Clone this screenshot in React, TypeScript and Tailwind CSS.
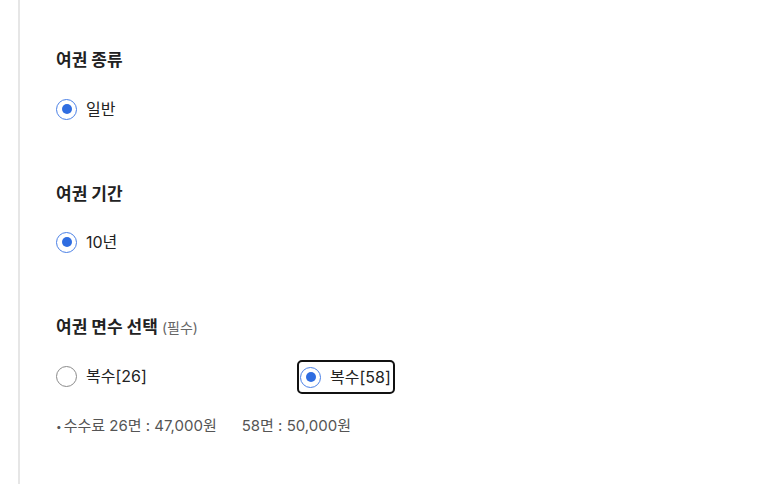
import React from 'react';

const font = { fontFamily: 'Inter, "Noto Sans CJK KR", sans-serif' };

function Radio({ checked }: { checked: boolean }) {
  return checked ? (
    <span className="flex items-center justify-center w-[21px] h-[21px] rounded-full border-[1.5px] border-[#4a80e6] bg-white shrink-0">
      <span className="w-[10px] h-[10px] rounded-full bg-[#2f6de1]" />
    </span>
  ) : (
    <span className="w-[21px] h-[21px] rounded-full border border-[#8a8a8a] bg-white shrink-0" />
  );
}

function Option({ label, checked, focused }: { label: string; checked: boolean; focused?: boolean }) {
  return (
    <label
      className={
        'inline-flex items-center gap-[9px] h-[28px] pr-[1px] rounded-[2px] text-[16px] text-[#222] ' +
        (focused ? 'outline-2 outline-[#111] outline-offset-[1px]' : '')
      }
    >
      <Radio checked={checked} />
      <span className="leading-[28px]">{label}</span>
    </label>
  );
}

function Section({ title, sub, children }: { title: string; sub?: string; children: React.ReactNode }) {
  return (
    <section>
      <h3 className="h-[24px] leading-[24px] text-[17px] font-bold text-[#222]">
        {title}
        {sub && <span className="ml-[4px] text-[14px] font-normal text-[#666]">{sub}</span>}
      </h3>
      {children}
    </section>
  );
}

export default function App() {
  return (
    <div className="h-[484px] w-full bg-white overflow-hidden" style={font}>
      <div className="ml-[18px] h-full border-l-2 border-[#e6e6e6] pl-[36px] pt-[48px]">
        <Section title="여권 종류">
          <div className="mt-[23px]">
            <Option label="일반" checked />
          </div>
        </Section>

        <div className="mt-[59px]">
          <Section title="여권 기간">
            <div className="mt-[22px]">
              <Option label="10년" checked />
            </div>
          </Section>
        </div>

        <div className="mt-[59px]">
          <Section title="여권 면수 선택" sub="(필수)">
            <div className="mt-[23px] grid grid-cols-[244px_auto] items-center">
              <div>
                <Option label="복수[26]" checked={false} />
              </div>
              <div>
                <Option label="복수[58]" checked focused />
              </div>
            </div>
            <p className="mt-[23px] flex items-center text-[15px] leading-[20px] text-[#555]">
              <span className="mr-[2px] text-[10px]">•</span>
              <span>수수료 26면 : 47,000원</span>
              <span className="ml-[25px]">58면 : 50,000원</span>
            </p>
          </Section>
        </div>
      </div>
    </div>
  );
}
